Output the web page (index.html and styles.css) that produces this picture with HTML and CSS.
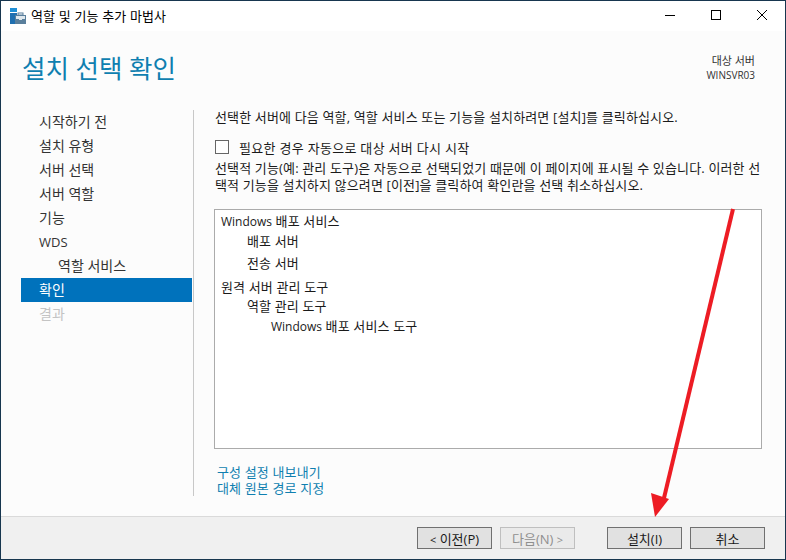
FILE: index.html
```html
<!DOCTYPE html>
<html lang="ko">
<head>
<meta charset="utf-8">
<title>역할 및 기능 추가 마법사</title>
<link rel="stylesheet" href="styles.css">
</head>
<body>
<div class="window">
  <div class="titlebar">
    <svg class="appicon" width="16" height="16" viewBox="0 0 16 16">
      <rect x="0" y="0" width="7" height="4" fill="#1f8fd6"/>
      <rect x="0" y="5" width="7" height="11" fill="#1f6fb0"/>
      <rect x="5" y="7" width="11" height="9" fill="#5a7f9c"/>
      <rect x="6" y="8" width="9" height="3" fill="#dfe8ee"/>
      <rect x="8" y="5" width="5" height="2" fill="none" stroke="#5a7f9c"/>
      <rect x="9" y="11" width="3" height="1" fill="#dfe8ee"/>
    </svg>
    <span class="title">역할 및 기능 추가 마법사</span>
    <div class="winbtns">
      <svg width="12" height="12" viewBox="0 0 12 12"><path d="M1 6.500H11" stroke="#000" fill="none"/></svg>
      <svg width="12" height="12" viewBox="0 0 12 12"><rect x="1.500" y="1.500" width="9" height="9" stroke="#000" fill="none"/></svg>
      <svg width="12" height="12" viewBox="0 0 12 12"><path d="M1 1L11 11M11 1L1 11" stroke="#000" fill="none"/></svg>
    </div>
  </div>
  <div class="body">
    <header class="head">
      <h1>설치 선택 확인</h1>
      <div class="target"><div>대상 서버</div><div class="host">WINSVR03</div></div>
    </header>
    <div class="columns">
      <nav class="nav">
        <div class="step">시작하기 전</div>
        <div class="step">설치 유형</div>
        <div class="step">서버 선택</div>
        <div class="step">서버 역할</div>
        <div class="step">기능</div>
        <div class="step"><span class="lat">WDS</span></div>
        <div class="step sub">역할 서비스</div>
        <div class="step active">확인</div>
        <div class="step off">결과</div>
      </nav>
      <main class="content">
        <p class="intro">선택한 서버에 다음 역할, 역할 서비스 또는 기능을 설치하려면 [설치]를 클릭하십시오.</p>
        <label class="check"><span class="box"></span>필요한 경우 자동으로 대상 서버 다시 시작</label>
        <p class="note">선택적 기능(예: 관리 도구)은 자동으로 선택되었기 때문에 이 페이지에 표시될 수 있습니다. 이러한 선<br>택적 기능을 설치하지 않으려면 [이전]을 클릭하여 확인란을 선택 취소하십시오.</p>
        <div class="list">
          <div class="li"><span class="lat">Windows</span> 배포 서비스</div>
          <div class="li l1 g1">배포 서버</div>
          <div class="li l1 g2">전송 서버</div>
          <div class="li g4">원격 서버 관리 도구</div>
          <div class="li l1 gn">역할 관리 도구</div>
          <div class="li l2"><span class="lat">Windows</span> 배포 서비스 도구</div>
        </div>
        <div class="links">
          <a>구성 설정 내보내기</a>
          <a>대체 원본 경로 지정</a>
        </div>
      </main>
    </div>
  </div>
  <footer class="footer">
    <button class="btn"><span class="lt">&lt;</span> 이전(P)</button>
    <button class="btn dis">다음(N) <span class="lt">&gt;</span></button>
    <button class="btn install">설치(I)</button>
    <button class="btn">취소</button>
  </footer>
  <svg class="arrow" width="786" height="560" viewBox="0 0 786 560">
    <path d="M733 209L664 498" stroke="#ed1c24" stroke-width="4" fill="none"/>
    <path d="M651 493L669 499L655 517Z" fill="#ed1c24"/>
  </svg>
</div>
</body>
</html>
```
FILE: styles.css
```css
* { box-sizing: border-box; }
html, body { margin: 0; padding: 0; }
body { width: 786px; height: 560px; overflow: hidden; font-family: "Open Sans", "Noto Sans CJK KR", sans-serif; font-size: 13px; letter-spacing: .15px; color: #1a1a1a; }
.window { position: relative; width: 786px; height: 560px; border: 1px solid #17364f; display: flex; flex-direction: column; background: #fcfcfc; }
.titlebar { height: 30px; background: #fff; display: flex; align-items: center; padding-left: 9px; flex: none; }
.appicon { margin-top: -1px; }
.title { margin-left: 5px; margin-top: -2px; color: #000; }
.winbtns { margin-left: auto; display: flex; gap: 34px; padding-right: 17px; margin-top: -2px; }
.body { flex: 1; display: flex; flex-direction: column; min-height: 0; }
.head { height: 79px; flex: none; display: flex; justify-content: space-between; padding: 0 30px 0 21px; }
h1 { margin: 19px 0 0; font-size: 25.500px; font-weight: 400; letter-spacing: 0; line-height: 36px; color: #0f7fb0; }
.target { margin-top: 23px; text-align: right; font-size: 11px; line-height: 14px; color: #333; letter-spacing: 0; }
.host { font-size: 10px; }
.columns { flex: 1; display: flex; padding-left: 20px; min-height: 0; padding-bottom: 20px; }
.nav { width: 172px; flex: none; padding-right: 1px; font-size: 14px; letter-spacing: 0; }
.step { height: 24px; line-height: 24px; padding-left: 18px; color: #333; }
.sub { padding-left: 37px; }
.active { background: #0072bc; color: #fff; }
.off { color: #c4c4c4; }
.lat { font-size: 12px; letter-spacing: 0; }
.nav .lat { font-size: 13px; }
.content { border-left: 1px solid #c8c8c8; flex: 1; padding-left: 20px; padding-right: 23px; display: flex; flex-direction: column; }
.intro { margin: 0 0 0 1px; line-height: 14px; white-space: nowrap; }
.check { display: flex; align-items: center; margin: 16px 0 0 1px; height: 14px; letter-spacing: .3px; }
.box { width: 14px; height: 14px; border: 1px solid #666; background: #fff; margin-right: 10px; flex: none; }
.note { margin: 6px 0 0 1px; line-height: 17px; white-space: nowrap; }
.list { margin-top: 15px; height: 240px; border: 1px solid #ababab; background: #fff; padding: 1px 6px; flex: none; }
.li { line-height: 20px; color: #1a1a1a; }
.l1 { padding-left: 26px; }
.l2 { padding-left: 50px; }
.g1 { margin-top: -1px; }
.g2 { margin-top: 2px; }
.g4 { margin-top: 4px; }
.gn { margin-top: -1px; }
.links { margin-top: 15px; margin-left: 3px; display: flex; flex-direction: column; line-height: 16px; color: #0f7fb0; }
.footer { height: 43px; flex: none; border-top: 1px solid #dadada; background: #f0f0f0; display: flex; padding: 10px 20px 0 0; justify-content: flex-end; align-items: flex-start; }
.btn { width: 75px; height: 22px; padding: 0; border: 1px solid #707070; background: #e1e1e1; font: inherit; letter-spacing: 0; color: #1a1a1a; margin-left: 8px; }
.lt { font-size: 11px; }
.dis { border-color: #bfbfbf; color: #8f8f8f; background: #eaeaea; }
.install { margin-left: 32px; }
.arrow { position: absolute; left: -1px; top: -1px; pointer-events: none; }
```
